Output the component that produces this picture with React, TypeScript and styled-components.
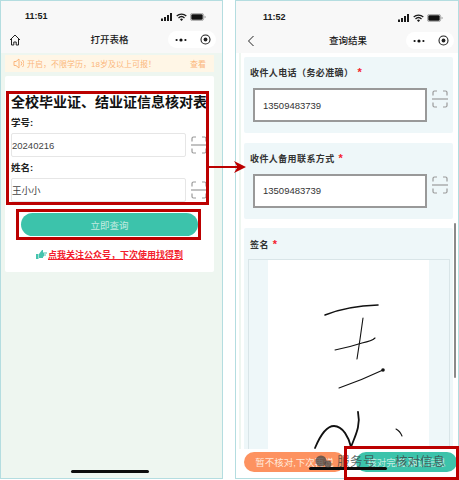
import React from 'react'
import styled, { createGlobalStyle } from 'styled-components'

const GlobalStyle = createGlobalStyle`
  html, body {
    margin: 0;
    padding: 0;
    background: #fff;
  }
  body {
    font-family: "Liberation Sans", "Noto Sans CJK SC", sans-serif;
  }
`

const Stage = styled.div`
  position: relative;
  width: 459px;
  height: 480px;
  overflow: hidden;
  display: flex;
  gap: 12px;
  background: #fff;
`

const Phone = styled.div<{ $bg: string; $width: number }>`
  position: relative;
  box-sizing: border-box;
  width: ${({ $width }) => $width}px;
  height: 479px;
  border: 1px solid #b4dde0;
  background: ${({ $bg }) => $bg};
  display: flex;
  flex-direction: column;
  overflow: hidden;
`

const Header = styled.div<{ $offset: number }>`
  flex-shrink: 0;
  box-sizing: border-box;
  height: 52px;
  padding-top: ${({ $offset }) => $offset}px;
  background: #f8f8f8;
  color: #1a1a1a;
`

const StatusBar = styled.div<{ $timeLeft: number; $right: number }>`
  height: 27px;
  display: flex;
  align-items: flex-end;
  justify-content: space-between;
  box-sizing: border-box;
  padding: 0 ${({ $right }) => $right}px 7px ${({ $timeLeft }) => $timeLeft}px;
`

const Time = styled.span`
  font-size: 9px;
  font-weight: 700;
  line-height: 10px;
`

const StatusIcons = styled.div`
  display: flex;
  align-items: center;
  gap: 3px;
`

const NavBar = styled.div<{ $padLeft: number; $padRight: number }>`
  position: relative;
  box-sizing: border-box;
  height: 25px;
  display: flex;
  align-items: center;
  justify-content: center;
  padding: 0 ${({ $padRight }) => $padRight}px 3px ${({ $padLeft }) => $padLeft}px;
  font-size: 9.5px;
  font-weight: 500;
`

const NavLeft = styled.div<{ $left: number }>`
  position: absolute;
  left: ${({ $left }) => $left}px;
  top: 6px;
  display: flex;
`

const Capsule = styled.div<{ $right: number }>`
  position: absolute;
  right: ${({ $right }) => $right}px;
  top: 3px;
  width: 48px;
  height: 17px;
  border-radius: 9px;
  background: #fff;
  display: flex;
  align-items: center;
  justify-content: space-between;
  box-sizing: border-box;
  padding: 0 5px 0 7px;
`

const Banner = styled.div`
  margin: 2px 8px 0 4px;
  height: 17px;
  display: flex;
  align-items: center;
  background: #fff6e6;
  color: #fbb67c;
  font-size: 8px;
  padding: 0 8px;
  gap: 3px;
`

const BannerText = styled.span`
  flex: 1;
`

const Card = styled.div`
  margin: 4px 8px 0 4px;
  height: 196px;
  box-sizing: border-box;
  padding: 16px 0 0 6px;
  background: #fff;
  border-radius: 2px;
`

const FormTitle = styled.div`
  font-size: 14px;
  font-weight: 700;
  line-height: 20px;
  color: #111;
  white-space: nowrap;
`

const FieldLabel = styled.div`
  margin-top: 4px;
  font-size: 9.5px;
  font-weight: 700;
  line-height: 14px;
  color: #222;
`

const FieldRow = styled.div`
  display: flex;
  align-items: center;
  gap: 5px;
  margin-top: 3px;
`

const FieldInput = styled.div`
  box-sizing: border-box;
  width: 175px;
  height: 24px;
  border: 1px solid #e6e6e6;
  border-radius: 2px;
  display: flex;
  align-items: center;
  font-size: 9.5px;
  color: #444;
`

const SubmitButton = styled.div`
  margin: 11px 0 0 10px;
  width: 177px;
  height: 23px;
  border-radius: 12px;
  background: #3cc3ab;
  color: #c4ebe1;
  font-size: 9.5px;
  display: flex;
  align-items: center;
  justify-content: center;
`

const FollowRow = styled.div`
  margin: 12px 0 0 25px;
  display: flex;
  align-items: center;
  gap: 1px;
  font-size: 9px;
  font-weight: 700;
  color: #f31d2d;
  text-decoration: underline;
  white-space: nowrap;
`

const HomeBar = styled.div<{ $left: number; $bottom: number }>`
  position: absolute;
  bottom: ${({ $bottom }) => $bottom}px;
  left: ${({ $left }) => $left}px;
  width: 78px;
  height: 3px;
  border-radius: 2px;
  background: #0c0c0c;
`

const ResultPage = styled.div`
  flex: 1;
  min-height: 0;
  background: linear-gradient(90deg, #fff 3px, #eef6f0 3px, #eef6f0 5px, #fff 5px);
  padding: 4px 5px 0 8px;
  display: flex;
  flex-direction: column;
  gap: 9.5px;
  overflow: hidden;
`

const Section = styled.div`
  flex-shrink: 0;
  background: #eef7f9;
  border-radius: 2px;
  box-sizing: border-box;
  height: 76px;
  padding: 10px 5px 0 6px;
`

const SignSection = styled(Section)`
  height: 260px;
  padding: 0 3px 0 4px;
`

const SignLabelRow = styled.div`
  height: 31px;
  box-sizing: border-box;
  padding: 11px 0 0 2px;
`

const SignFrame = styled.div`
  box-sizing: border-box;
  height: 229px;
  border: 1px solid #d9e5e8;
  padding: 0 20px 0 19px;
`

const SignCanvas = styled.div`
  height: 100%;
  background: #fff;
`

const SignSvg = styled.svg`
  display: block;
`

const SectionLabel = styled.div`
  font-size: 9px;
  font-weight: 700;
  line-height: 12px;
  letter-spacing: 0.4px;
  color: #333;
`

const Required = styled.span`
  color: #f5222d;
  margin-left: 4px;
  font-size: 11px;
  line-height: 0;
`

const PhoneRow = styled.div`
  display: flex;
  align-items: flex-start;
  gap: 5px;
  margin: 9px 0 0 3px;
`

const PhoneInput = styled.div`
  box-sizing: border-box;
  width: 174px;
  height: 34px;
  border: 2px solid #999;
  background: #fff;
  display: flex;
  align-items: center;
  padding-left: 8px;
  font-size: 9.5px;
  color: #333;
`

const ScanSlot = styled.div`
  display: flex;
  margin-top: 2px;
`

const BottomBar = styled.div`
  position: absolute;
  left: 0;
  right: 0;
  bottom: 0;
  height: 29px;
  background: #fff;
  display: flex;
  gap: 11px;
  padding: 3px 1px 0 8px;
  box-sizing: border-box;
`

const ActionButton = styled.div<{ $bg: string; $color: string }>`
  flex: 1;
  height: 20px;
  border-radius: 10px;
  background: ${({ $bg }) => $bg};
  color: ${({ $color }) => $color};
  font-size: 9.5px;
  display: flex;
  align-items: center;
  justify-content: center;
`

const ScrollThumb = styled.div`
  position: absolute;
  right: 2px;
  top: 222px;
  width: 2px;
  height: 155px;
  background: #8a8a8a;
  border-radius: 1px;
`

const Watermark = styled.div`
  position: absolute;
  left: 315px;
  top: 454px;
  display: flex;
  align-items: center;
  font-size: 12.5px;
  line-height: 16px;
  color: rgba(60, 72, 72, 0.8);
  white-space: nowrap;
`

const WatermarkName = styled.span`
  margin-left: 5px;
  letter-spacing: 0.5px;
`

const WatermarkTitle = styled.span`
  margin-left: 19px;
`

const RedBox = styled.div<{ $x: number; $y: number; $w: number; $h: number }>`
  position: absolute;
  box-sizing: border-box;
  left: ${({ $x }) => $x}px;
  top: ${({ $y }) => $y}px;
  width: ${({ $w }) => $w}px;
  height: ${({ $h }) => $h}px;
  border: 3px solid #bb0000;
`

const Arrow = styled.svg`
  position: absolute;
  left: 208px;
  top: 160px;
`

function Signal() {
  return (
    <svg width="12" height="8" viewBox="0 0 12 8">
      <path d="M0 5.5h2V8H0zM3 4h2v4H3zM6 2h2v6H6zM9 0h2v8H9z" fill="#1a1a1a" />
    </svg>
  )
}

function Wifi() {
  return (
    <svg width="11" height="8" viewBox="0 0 11 8" fill="none" stroke="#1a1a1a" strokeWidth="1.3">
      <path d="M.7 3a7 7 0 0 1 9.6 0M2.5 4.9a4.4 4.4 0 0 1 6 0" />
      <path d="M5.5 8 4 6.4a2 2 0 0 1 3 0z" fill="#1a1a1a" stroke="none" />
    </svg>
  )
}

function Battery() {
  return (
    <svg width="16" height="8" viewBox="0 0 16 8">
      <rect x=".4" y=".4" width="13.2" height="7.2" rx="2" fill="none" stroke="#888" strokeWidth=".7" />
      <rect x="1.3" y="1.3" width="11.4" height="5.4" rx="1.2" fill="#111" />
      <path d="M14.6 2.8c.7.2 1 .7 1 1.2s-.3 1-1 1.2z" fill="#888" />
    </svg>
  )
}

function CapsuleIcons() {
  return (
    <>
      <svg width="12" height="4" viewBox="0 0 12 4" fill="#111">
        <circle cx="1.6" cy="2" r="1.1" />
        <circle cx="6" cy="2" r="1.6" />
        <circle cx="10.4" cy="2" r="1.1" />
      </svg>
      <svg width="11" height="11" viewBox="0 0 11 11">
        <circle cx="5.5" cy="5.5" r="4.5" fill="none" stroke="#222" strokeWidth="1.1" />
        <circle cx="5.5" cy="5.5" r="1.9" fill="#222" />
      </svg>
    </>
  )
}

function ScanIcon() {
  return (
    <svg width="16" height="18" viewBox="0 0 16 18" fill="none" stroke="#9a9a9a" strokeWidth="1.2">
      <path d="M1 5.5V2.5a1.5 1.5 0 0 1 1.5-1.5H5M11 1h2.5A1.5 1.5 0 0 1 15 2.5v3" />
      <path d="M1 12.5v3A1.5 1.5 0 0 0 2.5 17H5M11 17h2.5a1.5 1.5 0 0 0 1.5-1.5v-3" />
      <path d="M0 9h16" />
    </svg>
  )
}

function StatusRow({ time, timeLeft, right }: { time: string; timeLeft: number; right: number }) {
  return (
    <StatusBar $timeLeft={timeLeft} $right={right}>
      <Time>{time}</Time>
      <StatusIcons>
        <Signal />
        <Wifi />
        <Battery />
      </StatusIcons>
    </StatusBar>
  )
}

// viewBox uses page coordinates so the strokes line up with the reference
function SignatureDrawing() {
  return (
    <SignSvg width="160" height="227" viewBox="268 260 160 227" fill="none" stroke="#111" strokeLinecap="round">
      <path d="M325 315Q347 306 378 305" strokeWidth="1.6" />
      <path d="M363 318Q360 340 357 359" strokeWidth="1.1" />
      <path d="M335 350Q350 347 362 343Q372 341 375 338" strokeWidth="1.1" />
      <path d="M339 388Q362 380 383 370" strokeWidth="1.1" />
      <circle cx="383" cy="370" r="1.8" fill="#111" stroke="none" />
      <path d="M315 448C320 436 327 426 334 426C343 426 349 438 351 447" strokeWidth="1.8" />
      <path d="M351 447C355 436 361 426 358 412" strokeWidth="1.8" />
      <path d="M396 429Q400 431 402 436" strokeWidth="1.1" />
    </SignSvg>
  )
}

export default function App() {
  return (
    <>
      <GlobalStyle />
      <Stage>
        <Phone $bg="#eef6f0" $width={223}>
          <Header $offset={0}>
            <StatusRow time="11:51" timeLeft={24} right={16} />
            <NavBar $padLeft={0} $padRight={4}>
              <NavLeft $left={8}>
                <svg width="12" height="12" viewBox="0 0 12 12" fill="none" stroke="#222" strokeWidth="1">
                  <path d="M1 6 6 1l5 5M2.5 5v6h2.3V8h2.4v3h2.3V5" />
                </svg>
              </NavLeft>
              打开表格
              <Capsule $right={6}>
                <CapsuleIcons />
              </Capsule>
            </NavBar>
          </Header>
          <Banner>
            <svg width="11" height="11" viewBox="0 0 11 11" fill="none" stroke="#fbb67c" strokeWidth="1">
              <path d="M1 3.5h2L6 1v9L3 7.5H1zM8 3.5a3 3 0 0 1 0 4M9.5 2a5 5 0 0 1 0 7" />
            </svg>
            <BannerText>开启，不限学历，18岁及以上可报！</BannerText>
            <span>查看</span>
          </Banner>
          <Card>
            <FormTitle>全校毕业证、结业证信息核对表</FormTitle>
            <FieldLabel>学号:</FieldLabel>
            <FieldRow>
              <FieldInput>20240216</FieldInput>
              <ScanIcon />
            </FieldRow>
            <FieldLabel>姓名:</FieldLabel>
            <FieldRow>
              <FieldInput>王小小</FieldInput>
              <ScanIcon />
            </FieldRow>
            <SubmitButton>立即查询</SubmitButton>
            <FollowRow>
              <svg width="11" height="9" viewBox="0 0 11 9" fill="#45c4ae">
                <path d="M0 4h2.5v5H0zM3 4l3-4h1v2.5h4v1H8v1h2v1H8v1H7v1.5H3z" />
              </svg>
              点我关注公众号，下次使用找得到
            </FollowRow>
          </Card>
          <HomeBar $left={70} $bottom={5} />
        </Phone>
        <Phone $bg="#fff" $width={224}>
          <Header $offset={1}>
            <StatusRow time="11:52" timeLeft={27} right={15} />
            <NavBar $padLeft={2} $padRight={0}>
              <NavLeft $left={11}>
                <svg width="8" height="12" viewBox="0 0 8 12" fill="none" stroke="#222" strokeWidth="1">
                  <path d="M6.5 1 1.5 6l5 5" />
                </svg>
              </NavLeft>
              查询结果
              <Capsule $right={4}>
                <CapsuleIcons />
              </Capsule>
            </NavBar>
          </Header>
          <ResultPage>
            <Section>
              <SectionLabel>
                收件人电话（务必准确）<Required>*</Required>
              </SectionLabel>
              <PhoneRow>
                <PhoneInput>13509483739</PhoneInput>
                <ScanSlot>
                  <ScanIcon />
                </ScanSlot>
              </PhoneRow>
            </Section>
            <Section>
              <SectionLabel>
                收件人备用联系方式<Required>*</Required>
              </SectionLabel>
              <PhoneRow>
                <PhoneInput>13509483739</PhoneInput>
                <ScanSlot>
                  <ScanIcon />
                </ScanSlot>
              </PhoneRow>
            </Section>
            <SignSection>
              <SignLabelRow>
                <SectionLabel>
                  签名<Required>*</Required>
                </SectionLabel>
              </SignLabelRow>
              <SignFrame>
                <SignCanvas>
                  <SignatureDrawing />
                </SignCanvas>
              </SignFrame>
            </SignSection>
          </ResultPage>
          <ScrollThumb />
          <BottomBar>
            <ActionButton $bg="#fd9260" $color="#ffe9dc">暂不核对,下次再说</ActionButton>
            <ActionButton $bg="#3cc3ab" $color="#c4ebe1">核对完成,确认信息</ActionButton>
          </BottomBar>
          <HomeBar $left={73} $bottom={8} />
        </Phone>
        <Watermark>
          <svg width="17" height="14" viewBox="0 0 17 14" fill="rgba(70, 70, 70, 0.75)">
            <circle cx="6" cy="6" r="5.5" />
            <circle cx="13" cy="9" r="3.5" />
          </svg>
          <WatermarkName>服务号</WatermarkName>
          <WatermarkTitle>核对信息</WatermarkTitle>
        </Watermark>
        <RedBox $x={6} $y={91} $w={203} $h={114} />
        <RedBox $x={16} $y={209} $w={185} $h={31} />
        <RedBox $x={344} $y={446} $w={115} $h={34} />
        <Arrow width="38" height="14" viewBox="0 0 38 14" fill="#bb0000">
          <path d="M0 6h29L26 1l12 6-12 6 3-5H0z" />
        </Arrow>
      </Stage>
    </>
  )
}
